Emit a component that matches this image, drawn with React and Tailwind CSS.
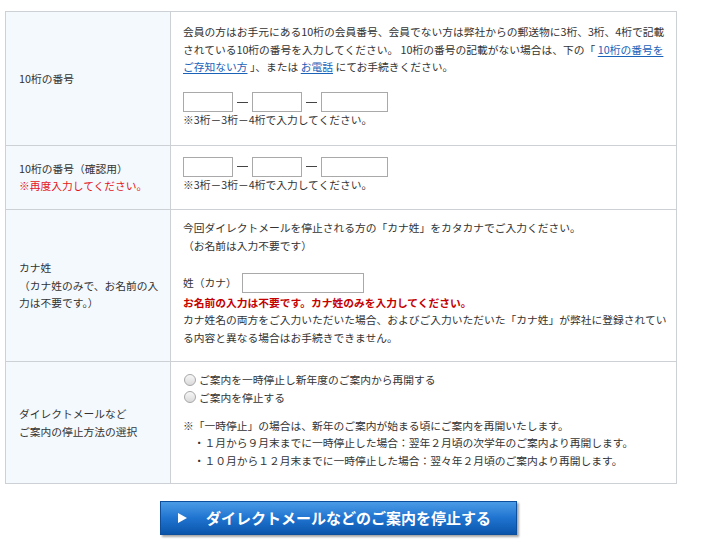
import React from "react";

const Lk = ({ children }) => (
  <a className="text-[#1a62b8] underline underline-offset-[2px]" href="#">
    {children}
  </a>
);

const Box = ({ w }) => (
  <span className={`block h-[20px] border border-[#a9a9a9] bg-white ${w}`} />
);

const Dash = () => (
  <span className="flex w-[19px] items-center justify-center">
    <span className="block h-[1px] w-[11px] bg-[#444]" />
  </span>
);

const NumInputs = () => (
  <div className="flex items-center">
    <Box w="w-[50px]" />
    <Dash />
    <Box w="w-[50px]" />
    <Dash />
    <Box w="w-[67px]" />
  </div>
);

const Radio = ({ children }) => (
  <div className="flex items-center">
    <span className="mr-[3px] ml-[1px] inline-block h-[12px] w-[12px] rounded-full border border-[#a8a8a8] bg-linear-to-b from-[#f7f7f7] to-[#dadada]" />
    <span>{children}</span>
  </div>
);

export default function App() {
  const label =
    "border border-[#cdd1d5] bg-[#f4f9fd] pl-[13px] pr-[4px] align-middle whitespace-nowrap";
  const cell = "border border-[#cdd1d5] bg-white pl-[12px] pr-[4px] align-top whitespace-nowrap";
  return (
    <div className="min-h-[551px] w-[704px] bg-white pt-[11px] pl-[5px] font-['Noto_Sans_CJK_JP','Noto_Sans',sans-serif] text-[10.75px] leading-[17.5px] text-[#333]">
      <table className="w-[672px] table-fixed border-collapse">
        <colgroup>
          <col className="w-[165px]" />
          <col />
        </colgroup>
        <tbody>
          <tr>
            <td className={label}>10桁の番号</td>
            <td className={`${cell} pt-[11px] pb-[16px]`}>
              <div>
                会員の方はお手元にある10桁の会員番号、会員でない方は弊社からの郵送物に3桁、3桁、4桁で記載
                <br />
                されている10桁の番号を入力してください。 10桁の番号の記載がない場合は、下の「{" "}
                <Lk>10桁の番号を</Lk>
                <br />
                <Lk>ご存知ない方</Lk> 」、または <Lk>お電話</Lk> にてお手続きください。
              </div>
              <div className="mt-[16.5px]">
                <NumInputs />
              </div>
              <div className="-mt-[1px]">※3桁－3桁－4桁で入力してください。</div>
            </td>
          </tr>
          <tr>
            <td className={label}>
              10桁の番号（確認用）
              <br />
              <span className="text-[#e3141b]">※再度入力してください。</span>
            </td>
            <td className={`${cell} pt-[11px] pb-[16px]`}>
              <NumInputs />
              <div className="-mt-[1px]">※3桁－3桁－4桁で入力してください。</div>
            </td>
          </tr>
          <tr>
            <td className={label}>
              カナ姓
              <br />
              （カナ姓のみで、お名前の入
              <br />
              力は不要です。）
            </td>
            <td className={`${cell} pt-[9px] pb-[15px]`}>
              <div>
                今回ダイレクトメールを停止される方の「カナ姓」をカタカナでご入力ください。
                <br />
                （お名前は入力不要です）
              </div>
              <div className="mt-[18.5px] flex h-[21px] items-center">
                <span className="mr-[5px]">姓（カナ）</span>
                <span className="block h-[20px] w-[122px] border border-[#a9a9a9] bg-white" />
              </div>
              <div className="font-bold text-[#c40000]">
                お名前の入力は不要です。カナ姓のみを入力してください。
              </div>
              <div>
                カナ姓名の両方をご入力いただいた場合、およびご入力いただいた「カナ姓」が弊社に登録されてい
                <br />
                る内容と異なる場合はお手続きできません。
              </div>
            </td>
          </tr>
          <tr>
            <td className={label}>
              ダイレクトメールなど
              <br />
              ご案内の停止方法の選択
            </td>
            <td className={`${cell} pt-[9px] pb-[14px]`}>
              <Radio>ご案内を一時停止し新年度のご案内から再開する</Radio>
              <Radio>ご案内を停止する</Radio>
              <div className="mt-[10.5px]">
                ※「一時停止」の場合は、新年のご案内が始まる頃にご案内を再開いたします。
                <br />
                {"\u3000・１月から９月末までに一時停止した場合：翌年２月頃の次学年のご案内より再開します。"}
                <br />
                {"\u3000・１０月から１２月末までに一時停止した場合：翌々年２月頃のご案内より再開します。"}
              </div>
            </td>
          </tr>
        </tbody>
      </table>
      <div className="mt-[17px] pl-[155px]">
        <button
          type="button"
          className="flex h-[34px] w-[357px] items-center border border-[#0d4f9c] bg-linear-to-b from-[#4a9be6] via-[#1f74d0] to-[#0a55ab] pl-[17px] text-[15px] font-bold text-white shadow-[2px_2px_2px_rgba(0,0,0,0.35)]"
        >
          <svg width="9" height="10" viewBox="0 0 9 10" className="mr-[19px]">
            <polygon points="0,0 9,5 0,10" fill="#ffffff" />
          </svg>
          <span>ダイレクトメールなどのご案内を停止する</span>
        </button>
      </div>
    </div>
  );
}
